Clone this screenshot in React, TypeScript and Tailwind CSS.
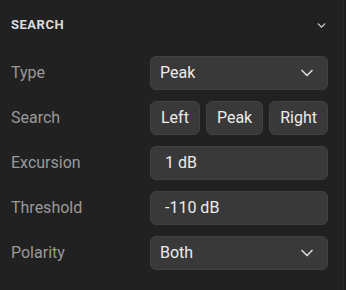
import { ChevronDown } from 'lucide-react';

function Select({ value }: { value: string }) {
  return (
    <div className="h-[34px] rounded-[6px] bg-[#393939] border border-[#414141] flex items-center justify-between pl-[9px] pr-[10px] text-[16px] text-[#ececec]">
      <span>{value}</span>
      <ChevronDown size={20} strokeWidth={2} className="text-[#d8d8d8]" />
    </div>
  );
}

function Input({ value }: { value: string }) {
  return (
    <div className="h-[34px] rounded-[6px] bg-[#393939] border border-[#414141] flex items-center pl-[14px] text-[16px] text-[#ececec]">
      {value}
    </div>
  );
}

function Row({ label, children }: { label: string; children: React.ReactNode }) {
  return (
    <div className="grid grid-cols-[139px_178px] items-center">
      <span className="text-[16px] text-[#9a9a9a]">{label}</span>
      {children}
    </div>
  );
}

export default function App() {
  return (
    <div
      className="w-[346px] h-[290px] flex bg-[#212121]"
      style={{ fontFamily: 'Roboto, "Liberation Sans", sans-serif' }}
    >
      <div className="flex-1 border-r border-[#2b2b2b] pl-[11px]">
        <div className="h-[50px] flex items-center justify-between pr-[15px]">
          <span className="text-[13px] font-bold tracking-[0.04em] text-[#dcdcdc]">SEARCH</span>
          <ChevronDown size={13} strokeWidth={2.5} className="text-[#cfcfcf]" />
        </div>
        <div className="pt-[6px] flex flex-col gap-[11px]">
          <Row label="Type">
            <Select value="Peak" />
          </Row>
          <Row label="Search">
            <div className="flex justify-between">
              {['Left', 'Peak', 'Right'].map((b) => (
                <div
                  key={b}
                  className="h-[34px] rounded-[6px] bg-[#393939] border border-[#414141] flex items-center px-[10px] text-[16px] text-[#ececec]"
                >
                  {b}
                </div>
              ))}
            </div>
          </Row>
          <Row label="Excursion">
            <Input value="1 dB" />
          </Row>
          <Row label="Threshold">
            <Input value="-110 dB" />
          </Row>
          <Row label="Polarity">
            <Select value="Both" />
          </Row>
        </div>
      </div>
      <div className="w-[2px] bg-[#1c1c1c]" />
    </div>
  );
}
